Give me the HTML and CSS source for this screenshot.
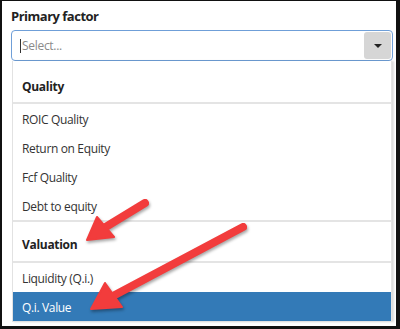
FILE: index.html
```
<!DOCTYPE html>
<html>
<head>
    <meta charset="utf-8">
    <title>primary-factor</title>
    <link rel="stylesheet" href="styles.css">
</head>
<body>
    <div class="frame">
        <div class="field">
            <label class="field-label">Primary factor</label>
            <div class="select">
                <span class="caret-cursor"></span>
                <span class="placeholder">Select...</span>
                <span class="toggle"><span class="tri"></span></span>
            </div>
            <ul class="menu">
                <!--Quality-->
                <li class="group">Quality</li>
                <li class="opt">ROIC Quality</li>
                <li class="opt">Return on Equity</li>
                <li class="opt">Fcf Quality</li>
                <li class="opt">Debt to equity</li>
                <!--Valuation-->
                <li class="group sep">Valuation</li>
                <li class="opt">Liquidity (Q.i.)</li>
                <li class="opt active">Q.i. Value</li>
            </ul>
        </div>
        <!--annotation arrows-->
        <svg class="arrows" width="400" height="329" viewBox="0 0 400 329">
            <g class="arrow">
                <line x1="145" y1="203" x2="104" y2="228"/>
                <polygon points="87,240 97,217 114,237"/>
            </g>
            <g class="arrow">
                <line x1="243" y1="227" x2="113" y2="296"/>
                <polygon points="91,309 105,283 122,307"/>
            </g>
        </svg>
    </div>
</body>
</html>
```
FILE: styles.css
```
body{
    margin:0;
    background:#fff;
    font-family:"Open Sans","Noto Sans",sans-serif;
}
.frame{
    position:relative;
    width:400px;
    height:329px;
    box-sizing:border-box;
    border-style:solid;
    border-color:#111;
    border-width:1px 4px 3px 2px;
    background:#fff;
    overflow:hidden;
}
.field{
    padding:6px 0 0 9px;
}
.field-label{
    display:block;
    font-size:13px;
    font-weight:bold;
    letter-spacing:-0.5px;
    line-height:18px;
    color:#222;
    margin-bottom:5px;
}
/*select box*/
.select{
    display:flex;
    align-items:center;
    width:382px;
    height:31px;
    box-sizing:border-box;
    border:1px solid #6f9fd8;
    border-radius:4px;
    padding:0 1px 0 8px;
}
.caret-cursor{
    width:1px;
    height:14px;
    background:#333;
}
.placeholder{
    flex:1;
    font-size:12px;
    letter-spacing:-0.3px;
    color:#8a8a8a;
    margin-left:1px;
}
.toggle{
    display:flex;
    align-items:center;
    justify-content:center;
    width:27px;
    height:27px;
    background:#d6d6d6;
    border-radius:3px;
}
.tri{
    width:0;
    height:0;
    border-left:4px solid transparent;
    border-right:4px solid transparent;
    border-top:4px solid #222;
}
/*dropdown*/
.menu{
    list-style:none;
    margin:0 0 0 1px;
    padding:0;
    width:380px;
    box-sizing:border-box;
    border:1px solid #e2e2e2;
    border-top:none;
    box-shadow:2px 0 2px rgba(0,0,0,0.15);
    background:#fff;
}
.group{
    font-size:12px;
    font-weight:bold;
    letter-spacing:-0.3px;
    color:#222;
    line-height:18px;
    padding:17px 9px 6px;
    border-bottom:2px solid #e4e4e4;
}
.group.sep{
    border-top:2px solid #e4e4e4;
    padding-top:14px;
    padding-bottom:7px;
}
.opt{
    font-size:12px;
    letter-spacing:-0.35px;
    color:#333;
    height:29px;
    line-height:31px;
    padding:0 9px;
}
.opt.active{
    background:#337ab7;
    color:#fff;
}
/*annotation*/
.arrows{
    position:absolute;
    left:-2px;
    top:-1px;
    pointer-events:none;
}
.arrow{
    filter:drop-shadow(1px 2px 1.5px rgba(0,0,0,0.35));
}
.arrow line{
    stroke:#f23c3c;
    stroke-width:8;
    stroke-linecap:round;
}
.arrow polygon{
    fill:#f23c3c;
    stroke:#f23c3c;
    stroke-width:2;
    stroke-linejoin:round;
}
```
